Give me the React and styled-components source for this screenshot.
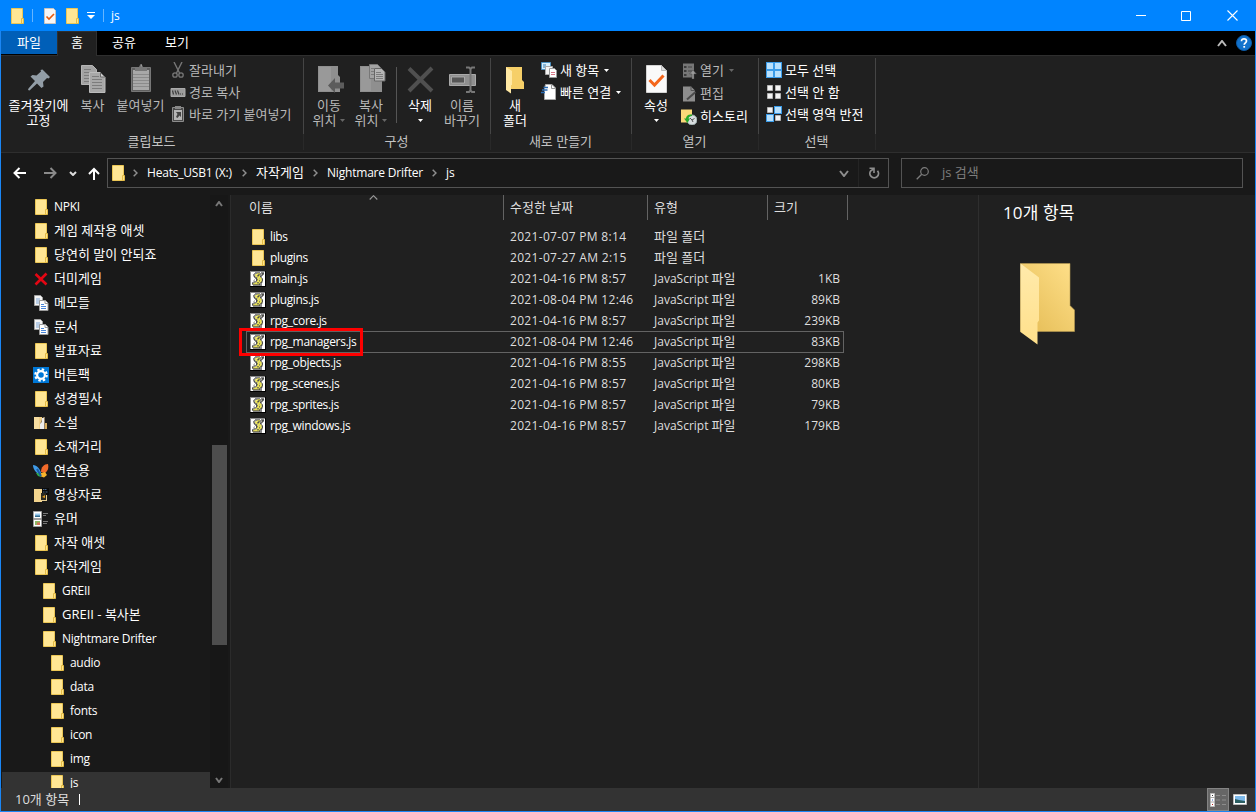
import React from "react";
import styled, { createGlobalStyle, css } from "styled-components";

const GlobalStyle = createGlobalStyle`
  * {
    box-sizing: border-box;
  }
  body {
    margin: 0;
    background: #191919;
    overflow: hidden;
  }
  svg {
    display: block;
    flex: none;
  }
`;

const Window = styled.div`
  width: 1256px;
  height: 812px;
  display: flex;
  flex-direction: column;
  border: 1px solid #1a86f5;
  border-top-width: 0;
  background: #191919;
  color: #fff;
  font-family: "Open Sans", "Noto Sans CJK KR", sans-serif;
  font-size: 13px;
  line-height: 15px;
  white-space: nowrap;
  cursor: default;
`;

/* text */

const Latin = styled.span`
  font-size: 12px;
  letter-spacing: ${(props) => props.$spacing || "-0.3px"};
`;
const Name = ({ children, spacing }) =>
  /[가-힣]/.test(children) ? (
    <span>{children}</span>
  ) : (
    <Latin $spacing={spacing}>{children}</Latin>
  );

/* icons */

const Svg = ({ w, h, children }) => (
  <svg width={w} height={h} viewBox={`0 0 ${w} ${h}`} fill="none">
    {children}
  </svg>
);

const FolderIcon = () => (
  <Svg w={13} h={16}>
    <path d="M.5.5h11v15H.5z" fill="#ffe694" stroke="#ebc655" />
    <path d="M10.5 10.5h2v5h-2z" fill="#ffe48c" stroke="#e3bb45" />
  </Svg>
);

/* one character per pixel: k black, y yellow, g grey */
const SCRIPT_PIXELS = [
  "",
  "     kkkkk kkk",
  "    kg yyykgkk",
  "   k yyykk gk",
  "   gkyykkykk",
  "    kgyyyyk",
  "     kkgyyyk",
  "      kyygyyk",
  "    g kkyyygk",
  "   g  kyykyyk",
  "    kkgyyyykg",
  "  kkgyykkykk",
  "  kyyyyyyk",
  "   kkkkkkkkk",
];
const SCRIPT_COLORS = { k: "#151515", y: "#e6dc1e", g: "#8f8f80" };

const ScriptIcon = () => (
  <Svg w={16} h={16}>
    <path d="M0 0h16v16H0z" fill="#000" />
    <path d="M0 0h15v15H0z" fill="#8a8a8a" />
    <path d="M1 1h14v14H1z" fill="#fff" />
    {SCRIPT_PIXELS.map((row, y) =>
      row
        .split("")
        .map((c, x) =>
          c === " " ? null : (
            <rect key={`${x}-${y}`} x={x} y={y + 0.5} width="1" height="1" fill={SCRIPT_COLORS[c]} />
          )
        )
    )}
  </Svg>
);

const CrossIcon = () => (
  <Svg w={14} h={14}>
    <path d="M1.500 2l11 10.500M12.500 1.500l-11 11" stroke="#e30613" strokeWidth="2.600" />
  </Svg>
);

const PapersIcon = () => (
  <Svg w={16} h={16}>
    <path d="M1.500.5h6l2 2v8h-8z" fill="#f4f4f4" stroke="#a4a4a4" />
    <path d="M3 4h4M3 6h4M3 8h3" stroke="#7ea7d8" />
    <path d="M6.500 5.500h6l2.500 2.500v7.500H6.500z" fill="#fff" stroke="#9a9a9a" />
    <path d="M12 5.500V8.500h3" stroke="#9a9a9a" />
    <path d="M8 9.500h3M8 11.500h5M8 13.500h5" stroke="#4a86d8" />
  </Svg>
);

const GearIcon = () => (
  <Svg w={16} h={16}>
    <path d="M0 0h16v16H0z" fill="#0078d7" />
    <circle cx="8" cy="8" r="5.700" stroke="#fff" strokeWidth="2.200" strokeDasharray="2.400 2.080" />
    <circle cx="8" cy="8" r="3.900" stroke="#fff" strokeWidth="2.200" />
  </Svg>
);

const BookFolderIcon = () => (
  <Svg w={16} h={16}>
    <path d="M1 2h8v12H1z" fill="#f0cf87" />
    <path d="M1 2h5v12H1z" fill="#f7dda0" />
    <path d="M7 9l3-7h2v12H7z" fill="#8f7f66" />
    <path d="M7 14V9l2-2V3h2v11z" fill="#eee" />
    <path d="M12 3v5h2v6h-2z" fill="#d9ae5e" />
  </Svg>
);

const MediaFolderIcon = () => (
  <Svg w={16} h={16}>
    <path d="M1 2h8v13H1z" fill="#f3d48d" />
    <path d="M9 1h7v7H9z" fill="#0a0a0a" />
    <path d="M10 2.500h1.500M12 2.500h1.500M10 5h1.500M12.500 5h2" stroke="#4c6b8f" />
    <path d="M8 6h5v8H8z" fill="#2b2a22" />
    <path d="M9 10l3-2v3z" fill="#e39a1a" />
    <path d="M8 13.500h5.500M13.500 8v6" stroke="#e7cf94" />
  </Svg>
);

const ButterflyIcon = () => (
  <Svg w={16} h={16}>
    <path d="M0 2c4 0 7 4 8 8L4 10C1 7 0 5 0 2z" fill="#3f9be8" />
    <path d="M3 10l5 0 0 4-3-1z" fill="#2fae4a" />
    <path d="M8 9c0-5 3-8 7-8 1 4 0 7-3 9z" fill="#f26a2a" />
    <path d="M8 10l4-1 2 3-3 2.500-3-1z" fill="#f7b52c" />
    <path d="M4 6l4 7" stroke="#1b5aa5" strokeWidth="2" />
  </Svg>
);

const GalleryIcon = () => (
  <Svg w={16} h={16}>
    <path d="M.5.5h8v7h-8zM.5 8.500h8v7h-8z" fill="#fff" stroke="#a0a0a0" />
    <path d="M2 2.500h5v3.500H2z" fill="#9ccbf0" />
    <path d="M2 4.500h5V6H2z" fill="#2f6a8f" />
    <path d="M2 10h5v4H2z" fill="#8fb766" />
    <path d="M4 11.500h3V14H4z" fill="#d4705a" />
    <path d="M10 2.500h5M10 4.500h3M10 10.500h5M10 12.500h4" stroke="#777" />
  </Svg>
);

const PinIcon = () => (
  <Svg w={32} h={32}>
    <path
      d="M19.500 6.500L27 14l-1.500 1.500-1.500-.5-4 4 .5 4.500-2 1.500-4.500-4.500L6.500 27.500 5 27l.5-1.500 6.500-7.500-4.500-4.500L9.500 12l4 .5 4.500-4-.500-1.500z"
      fill="#929da6"
    />
  </Svg>
);

const GreyLines = ({ d }) => <path d={d} stroke="#7c7c7c" />;

const CopyIcon = () => (
  <Svg w={32} h={32}>
    <path d="M4.500 2.500h11l4 4v15h-15z" fill="#a3a3a3" stroke="#b5b5b5" />
    <GreyLines d="M7 6.500h7M7 9.500h9M7 12.500h9M7 15.500h6M7 18.500h6" />
    <path d="M12.500 9.500h11l4.500 4.500v15.500H12.500z" fill="#a8a8a8" stroke="#bcbcbc" />
    <path d="M23.500 9.500v4.500H28z" fill="#cfcfcf" stroke="#6c6c6c" />
    <GreyLines d="M15 13.500h7M15 16.500h10M15 19.500h10M15 22.500h10M15 25.500h10" />
  </Svg>
);

const PasteIcon = () => (
  <Svg w={32} h={32}>
    <path d="M6.500 4.500h19v24h-19z" fill="#5f5f5f" stroke="#777" />
    <path d="M8 7h16v20H8z" fill="#a8a8a8" />
    <path d="M8 11.500h16M8 14.500h16M8 17.500h16M8 20.500h16M8 23.500h16" stroke="#8b8b8b" />
    <path d="M10 4h4l1-2h2l1 2h4v4H10z" fill="#777" />
    <path d="M15.500 1.500h1v2" stroke="#999" />
  </Svg>
);

const ScissorsIcon = () => (
  <Svg w={16} h={16}>
    <path d="M4 0l5.500 11M12 0L6.500 11" stroke="#777" strokeWidth="1.400" />
    <circle cx="5" cy="13" r="2.200" stroke="#777" strokeWidth="1.300" />
    <circle cx="11" cy="13" r="2.200" stroke="#777" strokeWidth="1.300" />
  </Svg>
);

const PathIcon = () => (
  <Svg w={16} h={16}>
    <path d="M1 4.500h14v8H1z" fill="#9b9b9b" stroke="#aaa" />
    <path d="M2.500 6.500l1 4M5 6.500l1.500 4M7.500 6.500l1.500 4M10 10h1M12 10h1" stroke="#3d3d3d" strokeWidth="1.200" />
  </Svg>
);

const ShortcutIcon = () => (
  <Svg w={16} h={16}>
    <path d="M2.500 1.500h11v14h-11z" fill="#4a4a4a" stroke="#8c8c8c" />
    <path d="M4 4h8v10H4z" fill="#b5b5b5" />
    <path d="M5 0h6v3H5z" fill="#888" />
    <path d="M6 6h5v5L9.500 9.500 7.500 12 6 11l1.500-3z" fill="#444" />
  </Svg>
);

const MoveToIcon = () => (
  <Svg w={32} h={32}>
    <path d="M5 3h20v9l2 2v15H5z" fill="#8f8f8f" />
    <path d="M6 4h12v24H6z" fill="#999" />
    <path d="M15 22.500l7-7.500v4.500h9v6h-9V30z" fill="#5c5c5c" />
  </Svg>
);

const CopyToIcon = () => (
  <Svg w={32} h={32}>
    <path d="M5 3h20v9l2 2v15H5z" fill="#8f8f8f" />
    <path d="M6 4h10v24H6z" fill="#999" />
    <path d="M14.500 1.500h8l3 3v11h-11z" fill="#a3a3a3" stroke="#777" />
    <path d="M19.500 5.500h7l3.500 3.500v9H19.500z" fill="#b5b5b5" stroke="#666" />
    <GreyLines d="M21 9.500h5M21 11.500h7M21 13.500h7M21 15.500h7M16 5.500h3M16 8.500h3M16 11.500h3" />
  </Svg>
);

const DeleteIcon = () => (
  <Svg w={32} h={32}>
    <path d="M5 5.500L28 28M28 5L5 28" stroke="#505050" strokeWidth="4" />
  </Svg>
);

const RenameIcon = () => (
  <Svg w={32} h={32}>
    <path d="M3.500 11.500h26v11h-26z" fill="#8f8f8f" stroke="#aaa" />
    <path d="M5.500 14h13v6h-13z" fill="#565656" stroke="#b5b5b5" strokeWidth=".8" />
    <path d="M20 4.500h3l1.500 1.500L26 4.500h3M20 29h3l1.500-1.500L26 29h3M24.500 6v21.500" stroke="#777" strokeWidth="2" />
  </Svg>
);

const OpenFolderIcon = () => (
  <Svg w={32} h={32}>
    <path d="M7 4h16v13l2 2v7H7z" fill="#f6cf68" />
    <path d="M7 4l6 4v14h-1v8.500L7 27z" fill="#ffe8a3" />
  </Svg>
);

const NewItemIcon = () => (
  <Svg w={16} h={16}>
    <path d="M.5.500h9v7h-9z" fill="#d8effb" stroke="#4c91c2" />
    <path d="M2 3h3M2 5h3" stroke="#347bb0" />
    <path d="M4.500 4.500h7v8h-7z" fill="#f4f4f4" stroke="#aaa" />
    <path d="M8.500 6.500h5l2 2v7h-7z" fill="#fff" stroke="#999" />
    <path d="M10 10.500h4M10 12.500h4" stroke="#d87788" />
  </Svg>
);

const QuickIcon = () => (
  <Svg w={16} h={16}>
    <path d="M4.500.500h6.500l3.500 3.500v11.500h-11v-11z" fill="#fff" stroke="#aaa" />
    <path d="M10.500.500V4.500h4" stroke="#999" />
    <path d="M2.500 3.500H7M1 6h5.500M0 8.500h4" stroke="#2b6cb4" strokeWidth="1.300" />
  </Svg>
);

const PropertiesIcon = () => (
  <Svg w={32} h={32}>
    <path d="M6.500 2.500h15l5 5v22h-20z" fill="#fafafa" stroke="#d4d4d4" />
    <path d="M21.500 2.500v5h5z" fill="#ddd" stroke="#bbb" />
    <path d="M9.500 17l5 5 9-9.500" stroke="#f4661b" strokeWidth="3" />
  </Svg>
);

const OpenIcon = () => (
  <Svg w={16} h={16}>
    <path d="M2 .500h11v14H2z" fill="#777" />
    <path d="M3 3h2.500v2H3zM3 7h2.500v2H3zM3 11h2.500v2H3z" fill="#3c3c3c" />
    <path d="M7 4h4M7 8h4" stroke="#444" />
    <path d="M11 16v-5H8.500L12 7l3.500 4H13v5z" fill="#999" stroke="#444" strokeWidth=".5" />
  </Svg>
);

const EditIcon = () => (
  <Svg w={16} h={16}>
    <path d="M2 .500h8l4 4V15.500H2z" fill="#8d8d8d" />
    <path d="M10 .500v4h4" stroke="#555" />
    <path d="M14.500 6L6 13.500" stroke="#4a4a4a" strokeWidth="2" />
  </Svg>
);

const HistoryIcon = () => (
  <Svg w={16} h={16}>
    <path d="M0 .500h11v13H0z" fill="#fbd978" />
    <circle cx="11" cy="11" r="5" fill="#d8dde0" stroke="#9aa" />
    <path d="M9 9l2 2 2.500-1.500M11 11l1 2" stroke="#555" />
    <path d="M11 5.500C7 5 5 7 5 9.500H3L6.500 14 9 9.500H7.500C7.500 8 9 7 11 7z" fill="#28a828" />
  </Svg>
);

const SELECT_CELLS = [
  [1, 1],
  [9, 1],
  [1, 9],
  [9, 9],
];
const SelectIcon = ({ active }) => (
  <Svg w={16} h={16}>
    {SELECT_CELLS.map(([x, y], i) =>
      active.includes(i) ? (
        <g key={i}>
          <path d={`M${x - 1} ${y - 1}h8v8h-8z`} fill="#3a9be8" />
          <path d={`M${x} ${y}h6v6h-6z`} fill="#b8e0fc" />
        </g>
      ) : (
        <path key={i} d={`M${x + 0.5} ${y + 0.5}h5v5h-5z`} fill="#f4f4f4" stroke="#b5b5b5" />
      )
    )}
  </Svg>
);

const Chevron = ({ w = 9, h = 6, up, color = "#999", width = 2 }) => (
  <Svg w={w} h={h}>
    <path
      d={up ? `M1 ${h - 1}L${w / 2} 1 ${w - 1} ${h - 1}` : `M1 1l${w / 2 - 1} ${h - 2} ${w / 2 - 1} ${2 - h}`}
      stroke={color}
      strokeWidth={width}
    />
  </Svg>
);

const CrumbArrow = () => (
  <Svg w={5} h={8}>
    <path d="M.7.700L4 4 .7 7.300" stroke="#8e8e8e" strokeWidth="1.500" />
  </Svg>
);

const DropArrow = ({ color = "#fff" }) => (
  <Svg w={5} h={3}>
    <path d="M0 0h5L2.500 3z" fill={color} />
  </Svg>
);

/* title bar */

const TitleBar = styled.div`
  display: flex;
  align-items: center;
  height: 31px;
  margin: 0 -1px;
  padding-left: 11px;
  background: #0084ff;
  flex: none;
`;
const TitleDivider = styled.div`
  width: 1px;
  height: 13px;
  margin: 0 12px 0 8px;
  background: #66b5ff;
`;
const QuickAccess = styled.div`
  display: flex;
  align-items: center;
  gap: 8px;
  margin-left: -1px;
`;
const WindowTitle = styled.div`
  margin-left: -5px;
  flex: 1;
`;
const WindowButton = styled.div`
  width: 46px;
  height: 31px;
  display: flex;
  align-items: center;
  justify-content: center;
  &:first-child {
    padding-left: 2px;
  }
`;
const WindowButtons = styled.div`
  display: flex;
  padding-right: 1px;
`;

/* ribbon */

const Tabs = styled.div`
  display: flex;
  height: 24px;
  background: #000;
  flex: none;
`;
const Tab = styled.div`
  width: ${(props) => props.$width}px;
  height: 24px;
  line-height: 22px;
  text-align: center;
  ${(props) =>
    props.$file &&
    css`
      height: 23px;
      background: #005fb8;
    `}
  ${(props) =>
    props.$active &&
    css`
      background: #202020;
      border: 1px solid #2f2f2f;
      border-bottom: none;
      height: 25px;
      line-height: 20px;
      z-index: 1;
    `}
`;
const TabTools = styled.div`
  display: flex;
  align-items: center;
  gap: 9px;
  margin-left: auto;
  padding-right: 3px;
`;
const Ribbon = styled.div`
  display: flex;
  height: 98px;
  padding-top: 2px;
  background: #202020;
  border-top: 1px solid #2e2e2e;
  border-bottom: 1px solid #2e2e2e;
  flex: none;
`;
const Group = styled.div`
  width: ${(props) => props.$width}px;
  height: 92px;
  display: flex;
  flex-direction: column;
  border-right: 1px solid;
  border-image: linear-gradient(#454545 75px, #292929 75px) 1;
`;
const GroupBody = styled.div`
  display: flex;
  height: 75px;
  padding-left: ${(props) => props.$left || 0}px;
`;
const GroupName = styled.div`
  height: 17px;
  line-height: 17px;
  padding-right: 1px;
  text-align: center;
  color: #c4c4c4;
`;
const BigButtonBox = styled.div`
  width: ${(props) => props.$width}px;
  padding-top: 5px;
  display: flex;
  flex-direction: column;
  align-items: center;
  color: ${(props) => (props.$dim ? "#b9b9b9" : "#fff")};
`;
const BigLabel = styled.div`
  height: 15px;
  margin-top: ${(props) => (props.$first ? "3px" : 0)};
  display: flex;
  align-items: center;
  gap: 4px;
`;
const SmallButtons = styled.div`
  display: flex;
  flex-direction: column;
  padding-top: ${(props) => props.$top ?? 1}px;
  padding-left: ${(props) => props.$left || 0}px;
`;
const SmallButton = styled.div`
  height: ${(props) => props.$height || 22}px;
  display: flex;
  align-items: center;
  gap: 3px;
  color: ${(props) => (props.$dim ? "#b9b9b9" : "#fff")};
  svg + span + svg {
    margin-left: 2px;
  }
`;
const ButtonDivider = styled.div`
  width: 1px;
  height: 56px;
  margin: 9px 2px 0 4px;
  background: #555;
`;

const BigButton = ({ width, icon, label, second, drop, dropColor, dim }) => (
  <BigButtonBox $width={width} $dim={dim}>
    {icon}
    <BigLabel $first>{label}</BigLabel>
    <BigLabel>
      {second}
      {drop && <DropArrow color={dropColor} />}
    </BigLabel>
  </BigButtonBox>
);

/* address row */

const AddressRow = styled.div`
  display: flex;
  align-items: center;
  height: 42px;
  padding: 0 12px 2px 12px;
  flex: none;
  span {
    padding-bottom: 2px;
  }
`;
const NavButtons = styled.div`
  width: 94px;
  display: flex;
  align-items: center;
  svg:nth-child(2) {
    margin-left: 18px;
  }
  svg:nth-child(3) {
    margin-left: 12px;
  }
  svg:nth-child(4) {
    margin-left: 11px;
  }
`;
const AddressBox = styled.div`
  width: 782px;
  height: 30px;
  display: flex;
  align-items: center;
  padding-left: 4px;
  border: 1px solid #535353;
`;
const Crumb = styled.div`
  width: ${(props) => props.$width}px;
  display: flex;
  align-items: center;
  gap: 9px;
`;
const AddressTools = styled.div`
  height: 28px;
  margin-left: auto;
  display: flex;
  align-items: center;
`;
const RefreshBox = styled.div`
  width: 30px;
  height: 28px;
  margin-left: 9px;
  display: flex;
  align-items: center;
  justify-content: center;
  border-left: 1px solid #242424;
`;
const SearchBox = styled.div`
  width: 342px;
  height: 30px;
  margin-left: 12px;
  padding-left: 14px;
  display: flex;
  align-items: center;
  gap: 13px;
  border: 1px solid #535353;
  color: #7d7d7d;
`;

/* body */

const Body = styled.div`
  display: flex;
  height: 593px;
  overflow: hidden;
  flex: none;
`;
const Sidebar = styled.div`
  width: 229px;
  display: flex;
  flex: none;
`;
const Tree = styled.div`
  width: 209px;
  padding: 1px 0 0 1px;
`;
const TreeRow = styled.div`
  height: 24px;
  display: flex;
  align-items: center;
  padding-bottom: 2px;
  padding-left: ${(props) => 31 + props.$level * 8}px;
  background: ${(props) => (props.$selected ? "#333" : "none")};
  span {
    padding-bottom: 2px;
  }
`;
const IconSlot = styled.div`
  width: 16px;
  height: 16px;
  margin-right: 5px;
  display: flex;
  align-items: center;
  justify-content: center;
  flex: none;
`;
const ScrollBar = styled.div`
  width: 18px;
  display: flex;
  flex-direction: column;
  align-items: center;
  padding: 6px 1px 5px 0;
  background: #171717;
`;
const ScrollThumb = styled.div`
  width: 15px;
  height: 200px;
  margin: 238px -1px auto 0;
  background: #4d4d4d;
`;
const Files = styled.div`
  width: 748px;
  background: #202020;
  border-left: 1px solid #2b2b2b;
  flex: none;
`;
const Header = styled.div`
  display: grid;
  grid-template-columns: 273px 144px 120px 80px;
  height: 25px;
  line-height: 24px;
  color: #dedede;
`;
const HeaderCell = styled.div`
  position: relative;
  padding-left: ${(props) => (props.$name ? 18 : 6)}px;
  border-right: 1px solid #636363;
  svg {
    position: absolute;
    left: 138px;
    top: 0;
  }
`;
const FileList = styled.div`
  padding-top: 6px;
`;
const FileRow = styled.div`
  position: relative;
  width: 598px;
  height: 21px;
  margin-left: 15px;
  display: grid;
  grid-template-columns: 264px 144px 120px 66px;
  align-items: center;
  color: #dedede;
  font-size: 12px;
  ${(props) =>
    props.$focused &&
    css`
      outline: 1px solid #636363;
      outline-offset: -1px;
      height: 22px;
      margin-bottom: -1px;
      padding-bottom: 1px;
      z-index: 1;
    `}
`;
const FileName = styled.div`
  display: flex;
  align-items: center;
  padding-left: 4px;
  color: #fff;
  ${IconSlot} {
    margin-right: 4px;
  }
`;
const FileDate = styled.div`
  letter-spacing: 0.32px;
`;
const FileType = styled.div`
  font-size: 12px;
`;
const Korean = styled.span`
  font-size: 13px;
`;
const FileSize = styled.div`
  text-align: right;
`;
const Highlight = styled.div`
  position: absolute;
  left: -7px;
  top: -3px;
  width: 124px;
  height: 28px;
  border: 3px solid #fe0000;
`;
const Details = styled.div`
  flex: 1;
  padding: 9px 0 0 24px;
  background: #202020;
  border-left: 1px solid #2e2e2e;
`;
const DetailsTitle = styled.div`
  height: 20px;
  line-height: 18px;
  font-size: 17px;
  letter-spacing: 0.1px;
  margin-bottom: 39px;
`;
const Preview = styled.div`
  padding-left: 16.5px;
`;

/* status bar */

const StatusBar = styled.div`
  height: 23px;
  display: flex;
  align-items: center;
  padding-left: 14px;
  background: #333;
  color: #dedede;
  flex: none;
`;
const StatusDivider = styled.div`
  width: 1px;
  height: 11px;
  margin-left: 10px;
  background: #fff;
`;
const ViewButtons = styled.div`
  display: flex;
  margin-left: auto;
  padding-right: 4px;
`;
const ViewButton = styled.div`
  width: 22px;
  height: 23px;
  display: flex;
  align-items: center;
  justify-content: center;
  ${(props) =>
    props.$active &&
    css`
      background: #666;
      border: 1px solid #848484;
    `}
`;

const tree = [
  { name: "NPKI" },
  { name: "게임 제작용 애셋" },
  { name: "당연히 말이 안되죠" },
  { name: "더미게임", icon: <CrossIcon /> },
  { name: "메모들", icon: <PapersIcon /> },
  { name: "문서", icon: <PapersIcon /> },
  { name: "발표자료" },
  { name: "버튼팩", icon: <GearIcon /> },
  { name: "성경필사" },
  { name: "소설", icon: <BookFolderIcon /> },
  { name: "소재거리" },
  { name: "연습용", icon: <ButterflyIcon /> },
  { name: "영상자료", icon: <MediaFolderIcon /> },
  { name: "유머", icon: <GalleryIcon /> },
  { name: "자작 애셋" },
  { name: "자작게임" },
  { name: "GREII", level: 1 },
  { name: "GREII - 복사본", level: 1 },
  { name: "Nightmare Drifter", level: 1 },
  { name: "audio", level: 2 },
  { name: "data", level: 2 },
  { name: "fonts", level: 2 },
  { name: "icon", level: 2 },
  { name: "img", level: 2 },
  { name: "js", level: 2, selected: true },
];

const files = [
  { name: "libs", date: "2021-07-07 PM 8:14" },
  { name: "plugins", date: "2021-07-27 AM 2:15" },
  { name: "main.js", date: "2021-04-16 PM 8:57", size: "1KB" },
  { name: "plugins.js", date: "2021-08-04 PM 12:46", size: "89KB" },
  { name: "rpg_core.js", date: "2021-04-16 PM 8:57", size: "239KB" },
  { name: "rpg_managers.js", date: "2021-08-04 PM 12:46", size: "83KB", focused: true },
  { name: "rpg_objects.js", date: "2021-04-16 PM 8:55", size: "298KB" },
  { name: "rpg_scenes.js", date: "2021-04-16 PM 8:57", size: "80KB" },
  { name: "rpg_sprites.js", date: "2021-04-16 PM 8:57", size: "79KB" },
  { name: "rpg_windows.js", date: "2021-04-16 PM 8:57", size: "179KB" },
];

const TitleSection = () => (
  <TitleBar>
    <FolderIcon />
    <TitleDivider />
    <QuickAccess>
      <Svg w={14} h={16}>
        <path d="M.5.500h9l2 2v13H.500z" fill="#f6f6f6" stroke="#c9c4c0" />
        <path d="M2.500 8.500l2.500 2.500 5-5" stroke="#e8590c" strokeWidth="1.600" />
      </Svg>
      <FolderIcon />
      <Svg w={8} h={7}>
        <path d="M0 .500h8" stroke="#fff" />
        <path d="M0 3h8L4 7z" fill="#fff" />
      </Svg>
    </QuickAccess>
    <TitleDivider />
    <WindowTitle>
      <Latin $spacing="0">js</Latin>
    </WindowTitle>
    <WindowButtons>
      <WindowButton>
        <Svg w={10} h={1}>
          <path d="M0 .500h10" stroke="#fff" />
        </Svg>
      </WindowButton>
      <WindowButton>
        <Svg w={10} h={10}>
          <path d="M.5.500h9v9h-9z" stroke="#fff" />
        </Svg>
      </WindowButton>
      <WindowButton>
        <Svg w={11} h={11}>
          <path d="M.5.500l10 10M10.500.500l-10 10" stroke="#fff" strokeWidth="1.100" />
        </Svg>
      </WindowButton>
    </WindowButtons>
  </TitleBar>
);

const RibbonSection = () => (
  <>
    <Tabs>
      <Tab $width={56} $file>
        파일
      </Tab>
      <Tab $width={40} $active>
        홈
      </Tab>
      <Tab $width={54}>공유</Tab>
      <Tab $width={52}>보기</Tab>
      <TabTools>
        <Chevron up w={10} h={7} color="#bbb" />
        <Svg w={16} h={16}>
          <circle cx="8" cy="8" r="7.500" fill="#1272cc" stroke="#0d5aa5" />
          <path d="M5.500 6.200C5.500 4.500 6.500 3.800 8 3.800s2.500.800 2.500 2.200C10.500 7.800 8.200 7.800 8.200 9.800" stroke="#fff" strokeWidth="1.700" />
          <path d="M7.300 11h1.800v1.700H7.300z" fill="#fff" />
        </Svg>
      </TabTools>
    </Tabs>
    <Ribbon>
      <Group $width={303}>
        <GroupBody $left={7}>
          <BigButton width={61} icon={<PinIcon />} label="즐겨찾기에" second="고정" />
          <BigButton width={47} icon={<CopyIcon />} label="복사" dim />
          <BigButton width={49} icon={<PasteIcon />} label="붙여넣기" dim />
          <SmallButtons $left={5}>
            <SmallButton $dim>
              <ScissorsIcon />
              <span>잘라내기</span>
            </SmallButton>
            <SmallButton $dim>
              <PathIcon />
              <span>경로 복사</span>
            </SmallButton>
            <SmallButton $dim>
              <ShortcutIcon />
              <span>바로 가기 붙여넣기</span>
            </SmallButton>
          </SmallButtons>
        </GroupBody>
        <GroupName>클립보드</GroupName>
      </Group>
      <Group $width={187}>
        <GroupBody $left={4}>
          <BigButton width={42} icon={<MoveToIcon />} label="이동" second="위치" drop dropColor="#666" dim />
          <BigButton width={42} icon={<CopyToIcon />} label="복사" second="위치" drop dropColor="#666" dim />
          <ButtonDivider />
          <BigButton width={42} icon={<DeleteIcon />} label="삭제" drop />
          <BigButton width={42} icon={<RenameIcon />} label="이름" second="바꾸기" dim />
        </GroupBody>
        <GroupName>구성</GroupName>
      </Group>
      <Group $width={141}>
        <GroupBody $left={3}>
          <BigButton width={42} icon={<OpenFolderIcon />} label="새" second="폴더" />
          <SmallButtons $left={5}>
            <SmallButton>
              <NewItemIcon />
              <span>새 항목</span>
              <DropArrow />
            </SmallButton>
            <SmallButton>
              <QuickIcon />
              <span>빠른 연결</span>
              <DropArrow />
            </SmallButton>
          </SmallButtons>
        </GroupBody>
        <GroupName>새로 만들기</GroupName>
      </Group>
      <Group $width={127}>
        <GroupBody $left={3}>
          <BigButton width={42} icon={<PropertiesIcon />} label="속성" drop />
          <SmallButtons $left={4} $top={1}>
            <SmallButton $height={23} $dim>
              <OpenIcon />
              <span>열기</span>
              <DropArrow color="#666" />
            </SmallButton>
            <SmallButton $height={23} $dim>
              <EditIcon />
              <span>편집</span>
            </SmallButton>
            <SmallButton $height={23}>
              <HistoryIcon />
              <span>히스토리</span>
            </SmallButton>
          </SmallButtons>
        </GroupBody>
        <GroupName>열기</GroupName>
      </Group>
      <Group $width={117}>
        <GroupBody $left={7}>
          <SmallButtons>
            <SmallButton>
              <SelectIcon active={[0, 1, 2, 3]} />
              <span>모두 선택</span>
            </SmallButton>
            <SmallButton>
              <SelectIcon active={[]} />
              <span>선택 안 함</span>
            </SmallButton>
            <SmallButton>
              <SelectIcon active={[1, 2]} />
              <span>선택 영역 반전</span>
            </SmallButton>
          </SmallButtons>
        </GroupBody>
        <GroupName>선택</GroupName>
      </Group>
    </Ribbon>
  </>
);

const AddressSection = () => (
  <AddressRow>
    <NavButtons>
      <Svg w={13} h={12}>
        <path d="M13 6H2M6.500 1L1.500 6l5 5" stroke="#fff" strokeWidth="2" />
      </Svg>
      <Svg w={13} h={12}>
        <path d="M0 6h11M6.500 1l5 5-5 5" stroke="#8a8a8a" strokeWidth="2" />
      </Svg>
      <Chevron w={8} h={5} color="#ddd" />
      <Svg w={12} h={13}>
        <path d="M6 13V2M1 7l5-5 5 5" stroke="#fff" strokeWidth="2" />
      </Svg>
    </NavButtons>
    <AddressBox>
      <Crumb $width={21}>
        <FolderIcon />
      </Crumb>
      <Crumb $width={109}>
        <CrumbArrow />
        <Name spacing="-0.2px">Heats_USB1 (X:)</Name>
      </Crumb>
      <Crumb $width={71}>
        <CrumbArrow />
        <Name>자작게임</Name>
      </Crumb>
      <Crumb $width={119}>
        <CrumbArrow />
        <Name spacing="-0.2px">Nightmare Drifter</Name>
      </Crumb>
      <Crumb $width={30}>
        <CrumbArrow />
        <Name spacing="0">js</Name>
      </Crumb>
      <AddressTools>
        <Chevron w={10} h={7} color="#8e8e8e" />
        <RefreshBox>
          <Svg w={12} h={12}>
            <path d="M9.500 3.700A4.300 4.300 0 1 1 2.800 3.800L5.500 2" stroke="#8e8e8e" strokeWidth="1.800" />
            <path d="M1.500 1.200H6V6" stroke="#8e8e8e" strokeWidth="1.600" />
          </Svg>
        </RefreshBox>
      </AddressTools>
    </AddressBox>
    <SearchBox>
      <Svg w={13} h={13}>
        <circle cx="8.500" cy="4.500" r="3.800" stroke="#7d7d7d" strokeWidth="1.200" />
        <path d="M5.700 7.300L.700 12.300" stroke="#7d7d7d" strokeWidth="1.300" />
      </Svg>
      <span>js 검색</span>
    </SearchBox>
  </AddressRow>
);

const FilesSection = () => (
  <Files>
    <Header>
      <HeaderCell $name>
        이름
        <Svg w={9} h={5}>
          <path d="M.7 4.500l3.800-3.800 3.800 3.800" stroke="#9a9a9a" strokeWidth="1.100" />
        </Svg>
      </HeaderCell>
      <HeaderCell>수정한 날짜</HeaderCell>
      <HeaderCell>유형</HeaderCell>
      <HeaderCell>크기</HeaderCell>
    </Header>
    <FileList>
      {files.map((file) => (
        <FileRow key={file.name} $focused={file.focused}>
          <FileName>
            <IconSlot>{file.size ? <ScriptIcon /> : <FolderIcon />}</IconSlot>
            <Latin $spacing="-0.35px">{file.name}</Latin>
          </FileName>
          <FileDate>{file.date}</FileDate>
          <FileType>
            {file.size && "JavaScript "}
            <Korean>{file.size ? "파일" : "파일 폴더"}</Korean>
          </FileType>
          <FileSize>{file.size}</FileSize>
          {file.focused && <Highlight />}
        </FileRow>
      ))}
    </FileList>
  </Files>
);

export default function App() {
  return (
    <>
      <GlobalStyle />
      <Window>
        <TitleSection />
        <RibbonSection />
        <AddressSection />
        <Body>
          <Sidebar>
            <Tree>
              {tree.map((item) => (
                <TreeRow key={item.name} $level={item.level || 0} $selected={item.selected}>
                  <IconSlot>{item.icon || <FolderIcon />}</IconSlot>
                  <Name>{item.name}</Name>
                </TreeRow>
              ))}
            </Tree>
            <ScrollBar>
              <Chevron up w={8} h={6} color="#777" />
              <ScrollThumb />
              <Chevron w={8} h={6} color="#777" />
            </ScrollBar>
          </Sidebar>
          <FilesSection />
          <Details>
            <DetailsTitle>10개 항목</DetailsTitle>
            <Preview>
              <Svg w={56} h={82}>
                <defs>
                  <linearGradient id="back" x1="0" y1="1" x2="1" y2="0">
                    <stop offset="0.2" stopColor="#e9c25e" />
                    <stop offset="1" stopColor="#ffe08a" />
                  </linearGradient>
                  <linearGradient id="flap" x1="0" y1="0" x2="0" y2="1">
                    <stop offset="0" stopColor="#ffeaab" />
                    <stop offset="1" stopColor="#ffe08b" />
                  </linearGradient>
                </defs>
                <path d="M.5.500h49.500v42l4.500 4.500v21.500H.500z" fill="url(#back)" stroke="#b79b52" strokeWidth=".6" />
                <path d="M.5.500L19 14.500v43l-1.500 2v22L.500 69z" fill="url(#flap)" />
              </Svg>
            </Preview>
          </Details>
        </Body>
        <StatusBar>
          <span>10개 항목</span>
          <StatusDivider />
          <ViewButtons>
            <ViewButton $active>
              <Svg w={16} h={14}>
                <path d="M.5.500h4v13h-4z" fill="#fff" stroke="#bbb" />
                <path d="M0 4.500h5M0 9h5" stroke="#aaa" />
                <path d="M2 2h1v1H2z" fill="#333" />
                <path d="M2 6.500h1v1H2z" fill="#36c" />
                <path d="M2 11h1v1H2z" fill="#b22" />
                <path d="M6 2.500h4M12 2.500h4M6 7h4M12 7h4M6 11.500h4M12 11.500h4" stroke="#8c8c8c" />
              </Svg>
            </ViewButton>
            <ViewButton>
              <Svg w={14} h={11}>
                <path d="M.5.500h13v10H.500z" fill="#fff" stroke="#bbb" />
                <path d="M2 2h10v7H2z" fill="#7db9ea" />
                <path d="M2 5l4 1 6 1v2H2z" fill="#2c5f62" />
              </Svg>
            </ViewButton>
          </ViewButtons>
        </StatusBar>
      </Window>
    </>
  );
}
